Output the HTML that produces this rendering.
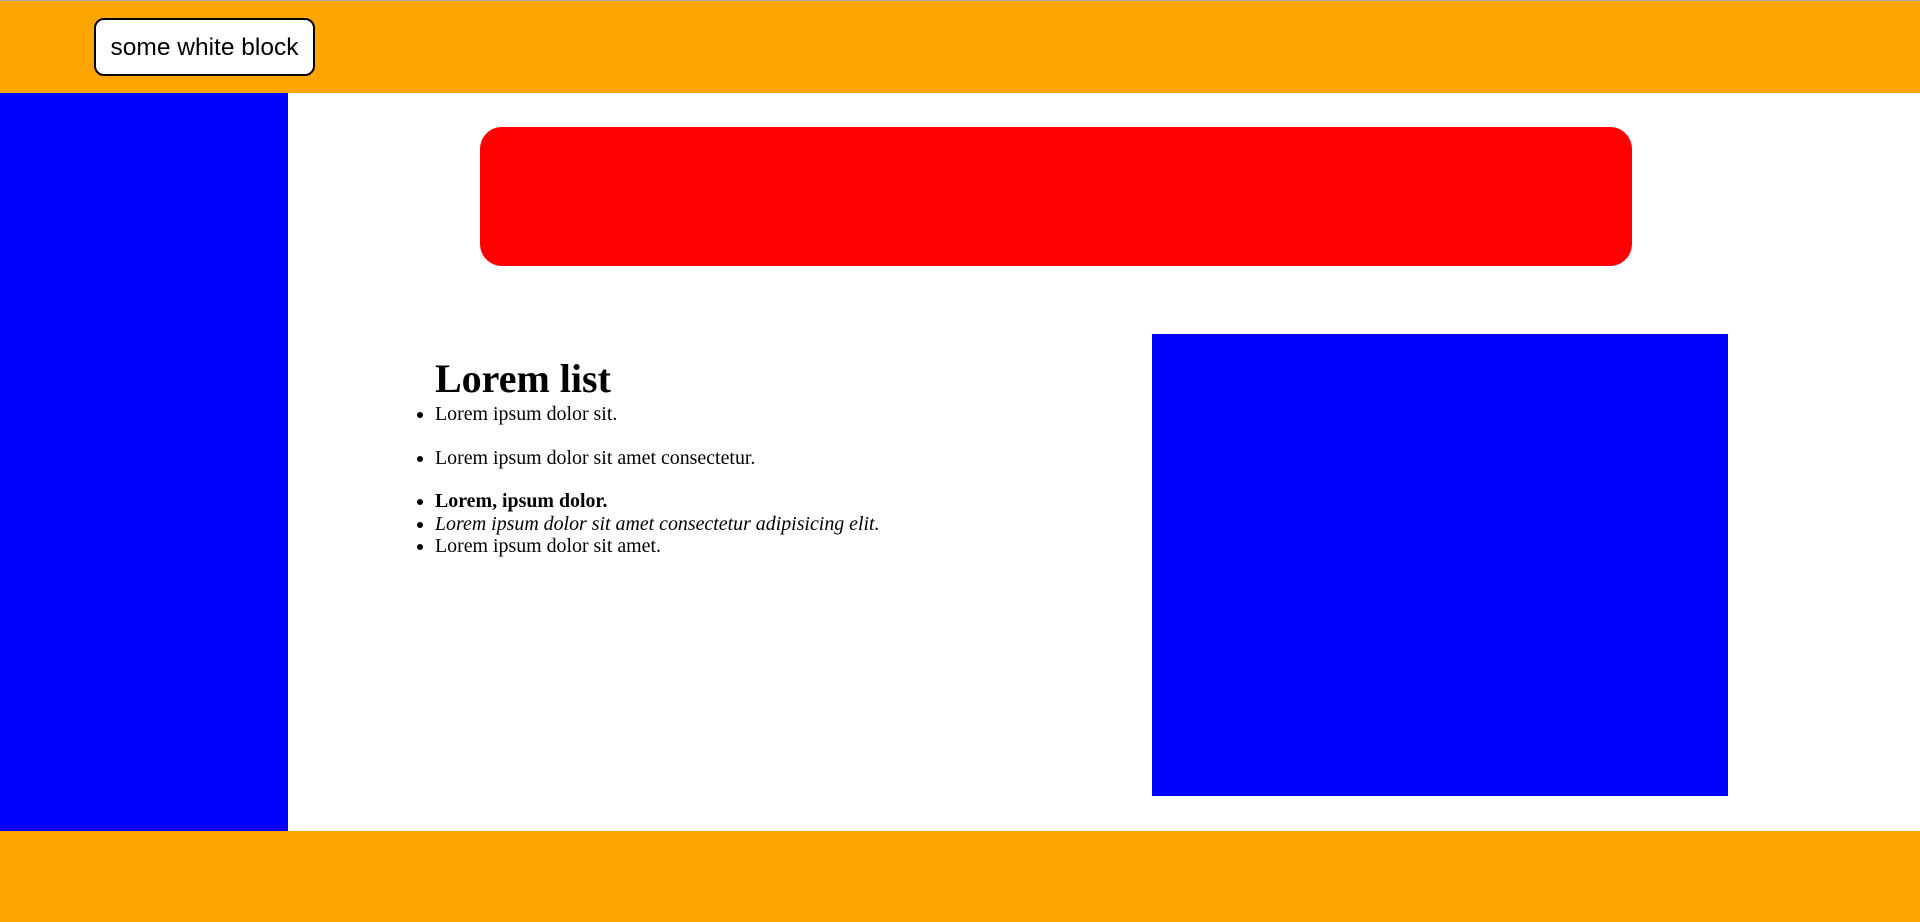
<!DOCTYPE html>
<html><head><style>
body{margin:0;width:1920px;height:922px;position:relative;overflow:hidden;background:#fff;font-family:"Liberation Serif",serif}
.a{position:absolute}
ul{margin:0;padding:0 0 0 0;list-style:disc}
li{position:absolute;left:435px;font-size:19.9px;white-space:nowrap;line-height:22px}
</style></head><body>
<div class="a" style="left:0;top:0;width:1920px;height:93px;background:#ffa500;border-top:1px solid #aaa;box-sizing:border-box"></div>
<div class="a" style="left:94px;top:18px;width:221px;height:58px;background:#fff;border:2px solid #000;border-radius:10px;box-sizing:border-box;font-family:'Liberation Sans',sans-serif;font-size:24.5px;line-height:55px;text-align:center">some white block</div>
<div class="a" style="left:0;top:93px;width:288px;height:738px;background:#00f"></div>
<div class="a" style="left:0;top:831px;width:1920px;height:91px;background:#ffa500"></div>
<div class="a" style="left:480px;top:127px;width:1152px;height:139px;background:#f00;border-radius:22px"></div>
<div class="a" style="left:1152px;top:334px;width:576px;height:462px;background:#00f"></div>
<div class="a" style="left:435px;top:355px;font-size:40px;font-weight:bold;line-height:48px">Lorem list</div>
<ul>
<li style="top:403px">Lorem ipsum dolor sit.</li>
<li style="top:447px">Lorem ipsum dolor sit amet consectetur.</li>
<li style="top:490px;font-weight:bold">Lorem, ipsum dolor.</li>
<li style="top:513px;font-style:italic">Lorem ipsum dolor sit amet consectetur adipisicing elit.</li>
<li style="top:535px">Lorem ipsum dolor sit amet.</li>
</ul>
</body></html>
